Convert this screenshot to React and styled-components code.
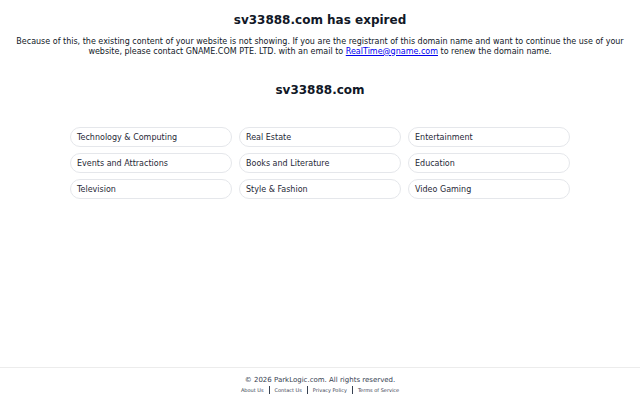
import React from "react"
import styled, { createGlobalStyle } from "styled-components"

const categories = [
  "Technology & Computing",
  "Real Estate",
  "Entertainment",
  "Events and Attractions",
  "Books and Literature",
  "Education",
  "Television",
  "Style & Fashion",
  "Video Gaming",
]

const links = ["About Us", "Contact Us", "Privacy Policy", "Terms of Service"]

const App = () => {
  return (
    <Page>
      <GlobalStyle />
      <Main>
        <Title>sv33888.com has expired</Title>
        <Notice>
          Because of this, the existing content of your website is not showing. If you are the
          registrant of this domain name and want to continue the use of your website, please
          contact GNAME.COM PTE. LTD. with an email to{" "}
          <a href="mailto:RealTime@gname.com">RealTime@gname.com</a> to renew the domain name.
        </Notice>
        <Domain>sv33888.com</Domain>
        <Grid>
          {categories.map((item) => (
            <Pill key={item}>{item}</Pill>
          ))}
        </Grid>
      </Main>
      <Footer>
        <Copy>© 2026 ParkLogic.com. All rights reserved.</Copy>
        <Links>
          {links.map((item) => (
            <FooterLink key={item}>{item}</FooterLink>
          ))}
        </Links>
      </Footer>
    </Page>
  )
}

export default App

const GlobalStyle = createGlobalStyle`
  html, body {
    margin: 0;
    padding: 0;
    background: #ffffff;
  }
  body {
    font-family: "DejaVu Sans", sans-serif;
    color: #111827;
  }
`

const Page = styled.div`
  min-height: 400px;
  display: flex;
  flex-direction: column;
`

const Main = styled.main`
  flex: 1;
  display: flex;
  flex-direction: column;
  align-items: center;
  padding: 11px 14px 0;
`

const Title = styled.h1`
  margin: 0;
  font-size: 12px;
  line-height: 18px;
  font-weight: 700;
`

const Notice = styled.p`
  margin: 8px 0 0;
  font-size: 8px;
  line-height: 9.5px;
  text-align: center;
  color: #111827;
  a {
    color: #0000ee;
  }
`

const Domain = styled.h2`
  margin: 25px 0 0;
  font-size: 12px;
  line-height: 18px;
  font-weight: 700;
`

const Grid = styled.div`
  margin-top: 28px;
  width: 500px;
  display: grid;
  grid-template-columns: repeat(3, 1fr);
  column-gap: 7px;
  row-gap: 6px;
`

const Pill = styled.div`
  height: 20px;
  box-sizing: border-box;
  border: 1px solid #e5e7eb;
  border-radius: 999px;
  padding: 0 6px;
  display: flex;
  align-items: center;
  font-size: 8px;
  color: #1f2937;
`

const Footer = styled.footer`
  border-top: 1px solid #ececec;
  padding: 7px 0 6px;
  display: flex;
  flex-direction: column;
  align-items: center;
`

const Copy = styled.div`
  font-size: 7px;
  line-height: 10px;
  color: #374151;
`

const Links = styled.div`
  display: flex;
  align-items: center;
  margin-top: 1px;
`

const FooterLink = styled.span`
  font-size: 5px;
  line-height: 8px;
  color: #374151;
  padding: 0 5px;
  & + & {
    border-left: 1px solid #374151;
  }
`
